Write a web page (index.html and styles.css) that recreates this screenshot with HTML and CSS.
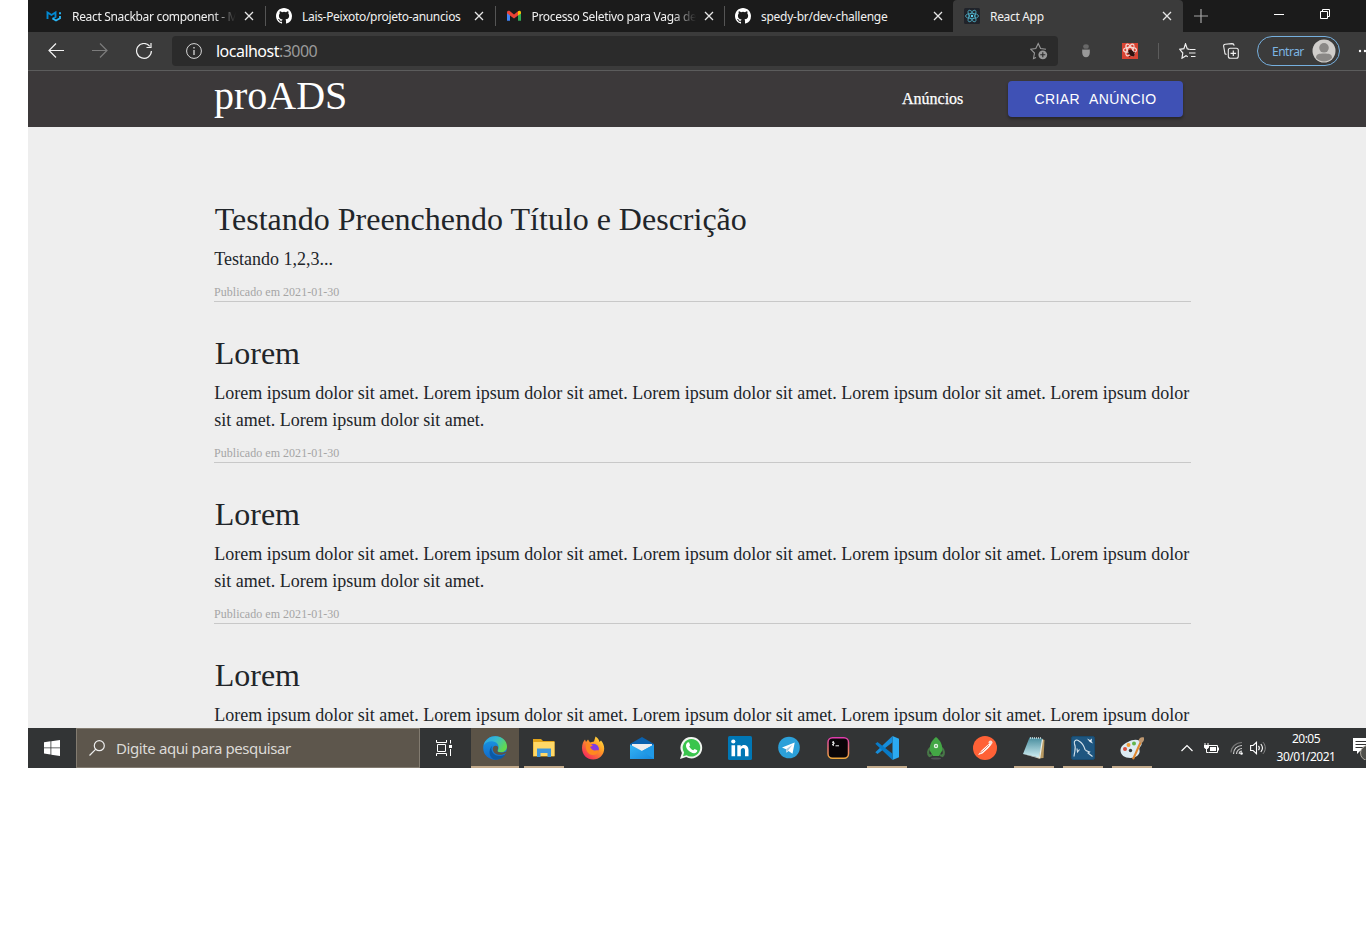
FILE: index.html
```html
<!DOCTYPE html>
<html lang="pt-BR">
<head>
<meta charset="utf-8">
<title>React App</title>
<link rel="stylesheet" href="styles.css">
</head>
<body>
<svg width="0" height="0" class="defs">
  <defs>
    <symbol id="close" viewBox="0 0 10 10"><path d="M1 1l8 8M9 1l-8 8" stroke="#e6e6e6" stroke-width="1.3" fill="none"/></symbol>
    <symbol id="github" viewBox="0 0 16 16"><path fill="#fff" d="M8 0C3.58 0 0 3.58 0 8c0 3.54 2.29 6.53 5.47 7.59.4.07.55-.17.55-.38v-1.49c-2.01.37-2.53-.49-2.69-.94-.09-.23-.48-.94-.82-1.13-.28-.15-.68-.52-.01-.53.63-.01 1.08.58 1.23.82.72 1.21 1.87.87 2.33.66.07-.52.28-.87.51-1.07-1.78-.2-3.64-.89-3.64-3.95 0-.87.31-1.59.82-2.15-.08-.2-.36-1.02.08-2.12 0 0 .67-.21 2.2.82a7.4 7.4 0 0 1 4 0c1.53-1.04 2.2-.82 2.2-.82.44 1.1.16 1.92.08 2.12.51.56.82 1.27.82 2.15 0 3.07-1.87 3.75-3.65 3.95.29.25.54.73.54 1.48v2.2c0 .21.15.46.55.38A8 8 0 0 0 16 8c0-4.42-3.58-8-8-8z"/></symbol>
    <linearGradient id="edgeA" x1="0" y1="0" x2="1" y2="0.5"><stop offset="0" stop-color="#2a9fe8"/><stop offset=".5" stop-color="#35b9d0"/><stop offset="1" stop-color="#62d94e"/></linearGradient>
    <linearGradient id="edgeB" x1="0" y1="0" x2="0" y2="1"><stop offset="0" stop-color="#1a9be6"/><stop offset="1" stop-color="#1268c8"/></linearGradient>
    <linearGradient id="fox" x1="1" y1="0" x2="0.2" y2="1"><stop offset="0" stop-color="#fff04a"/><stop offset=".45" stop-color="#ff9a24"/><stop offset="1" stop-color="#f5215f"/></linearGradient>
    <linearGradient id="term" x1="0" y1="0" x2="0" y2="1"><stop offset="0" stop-color="#e03cae"/><stop offset="1" stop-color="#f0a83c"/></linearGradient>
    <linearGradient id="note" x1="0" y1="0" x2="0" y2="1"><stop offset="0" stop-color="#478c9d"/><stop offset="1" stop-color="#cfeef2"/></linearGradient>
    <linearGradient id="mail" x1="0" y1="0" x2="1" y2="1"><stop offset="0" stop-color="#35b5f5"/><stop offset="1" stop-color="#1687dc"/></linearGradient>
  </defs>
</svg>
<div class="desktop">
  <div class="tabs">
    <div class="tab tab-first">
      <svg class="fav" viewBox="0 0 16 16"><path d="M1.500 11V4.500L5.500 7l4-2.500V9l-3 1.800" fill="none" stroke="#0288d1" stroke-width="1.900"/><path d="M6.500 10.500L10 12.500l4-2.300V8M14 4.200v2" fill="none" stroke="#29b6f6" stroke-width="1.900"/></svg>
      <span class="tab-title fade">React Snackbar component - M</span>
      <svg class="x"><use href="#close"/></svg>
    </div>
    <div class="tab">
      <svg class="fav"><use href="#github"/></svg>
      <span class="tab-title">Lais-Peixoto/projeto-anuncios</span>
      <svg class="x"><use href="#close"/></svg>
    </div>
    <div class="tab">
      <svg class="fav" viewBox="0 0 16 16"><path d="M1 3.500v9.300h3V7z" fill="#4285f4"/><path d="M15 3.500v9.300h-3V7z" fill="#34a853"/><path d="M1 4.500C1 2.500 3 2.500 4 3.200l4 3.200 4-3.200v4.200L8 10.500 1 5.300z" fill="#ea4335"/><path d="M12 3.200c1.200-1 3-.5 3 1.200V5.500L12 7.600z" fill="#fbbc04"/></svg>
      <span class="tab-title fade">Processo Seletivo para Vaga de</span>
      <svg class="x"><use href="#close"/></svg>
    </div>
    <div class="tab tab-last">
      <svg class="fav"><use href="#github"/></svg>
      <span class="tab-title">spedy-br/dev-challenge</span>
      <svg class="x"><use href="#close"/></svg>
    </div>
    <div class="tab active">
      <svg class="fav" viewBox="0 0 16 16"><rect width="16" height="16" rx="1.500" fill="#20232a"/><g fill="none" stroke="#4fb0c8" stroke-width=".8"><ellipse cx="8" cy="8" rx="6.500" ry="2.600"/><ellipse cx="8" cy="8" rx="6.500" ry="2.600" transform="rotate(60 8 8)"/><ellipse cx="8" cy="8" rx="6.500" ry="2.600" transform="rotate(120 8 8)"/></g><circle cx="8" cy="8" r="1.200" fill="#61dafb"/></svg>
      <span class="tab-title">React App</span>
      <svg class="x"><use href="#close"/></svg>
    </div>
    <div class="win">
      <svg class="plus" viewBox="0 0 14 14"><path d="M7 0v14M0 7h14" stroke="#a6a6a6" stroke-width="1.200"/></svg>
      <svg class="min" viewBox="0 0 10 10"><path d="M0 4.500h10" stroke="#fff"/></svg>
      <svg class="rest" viewBox="0 0 10 10"><path d="M.5 2.500h7v7h-7zM2.500 2.500v-2h7v7h-2" fill="none" stroke="#fff"/></svg>
    </div>
  </div>

  <div class="toolbar">
    <svg class="nav" viewBox="0 0 16 16"><path d="M16 7.500H1M8 .5l-7 7 7 7" fill="none" stroke="#f2f2f2" stroke-width="1.200"/></svg>
    <svg class="nav" viewBox="0 0 16 16"><path d="M0 7.500h15M8 .5l7 7-7 7" fill="none" stroke="#7c7c7c" stroke-width="1.200"/></svg>
    <svg class="nav" viewBox="0 0 16 16"><path d="M13.800 3.300A7.400 7.400 0 1 0 15.400 8M15 0v4.500h-4.500" fill="none" stroke="#f2f2f2" stroke-width="1.200"/></svg>
    <div class="address">
      <svg class="nav" viewBox="0 0 16 16"><circle cx="8" cy="8" r="7.400" fill="none" stroke="#d8d8d8"/><path d="M8 7v5M8 4v1.500" stroke="#d8d8d8" stroke-width="1.300"/></svg>
      <span class="url">localhost<span class="port">:3000</span></span>
      <svg class="addfav" viewBox="0 0 18 18"><path d="M6 15.500L3.500 16.500 4.500 11 .8 7.300l5-.8L8.200 1.500l2.400 5 5.400.8" fill="none" stroke="#999" stroke-width="1.100"/><circle cx="12.800" cy="12.800" r="4.400" fill="#999"/><path d="M12.800 10.300v5M10.300 12.800h5" stroke="#2b2b2b" stroke-width="1.100"/></svg>
    </div>
    <div class="tools">
      <svg class="bug" viewBox="0 0 16 16"><ellipse cx="8" cy="3.500" rx="2.800" ry="2.300" fill="#686868"/><path d="M4.200 6h7.600v3.500c0 3-1.600 4.800-3.800 4.800s-3.800-1.800-3.800-4.800z" fill="#999"/><path d="M4 6.300h8" stroke="#555"/></svg>
      <svg class="redext" viewBox="0 0 16 16"><rect width="16" height="16" fill="#d94332"/><g fill="none" stroke="#f5d5d0" stroke-width="1.200"><ellipse cx="8" cy="7" rx="6.500" ry="2.600"/><ellipse cx="8" cy="7" rx="6.500" ry="2.600" transform="rotate(60 8 7)"/><ellipse cx="8" cy="7" rx="6.500" ry="2.600" transform="rotate(120 8 7)"/></g><ellipse cx="9.500" cy="10" rx="2.300" ry="4" fill="#30120f" transform="rotate(-40 9.500 10)"/><path d="M5.500 10l6 3M7 14l6-5" stroke="#30120f" stroke-width=".8"/></svg>
      <i class="divider"></i>
      <svg class="favlist" viewBox="0 0 17 16"><path d="M10.300 6.300L8.200 5.800 6.500.8 4.900 5.600.8 6.300l3 3.700-.8 5.200 4-2.500 1.800 1M10.500 6.500h6M10 10h6.500M12 13.500h4.500" fill="none" stroke="#f0f0f0" stroke-width="1.200"/></svg>
      <svg class="coll" viewBox="0 0 16 16"><path d="M3.500 11.500L2 10.800.7 3.500C.5 2 1 1.300 2.300 1.200L9 .6c1.300 0 2 .6 2.200 2" fill="none" stroke="#f0f0f0" stroke-width="1.100"/><rect x="5.300" y="5.300" width="10" height="10" rx="2" fill="none" stroke="#f0f0f0" stroke-width="1.100"/><path d="M10.300 7.500v5.600M7.500 10.300h5.600" stroke="#f0f0f0" stroke-width="1.200"/></svg>
      <div class="login"><span>Entrar</span><svg viewBox="0 0 24 24"><circle cx="12" cy="12" r="11.500" fill="#cfcdca"/><circle cx="12" cy="8.800" r="4.800" fill="#8a8886"/><path d="M4 19c0-4 3-4.500 8-4.500s8 .5 8 4.500c-2 2-5 3.500-8 3.500S6 21 4 19z" fill="#8a8886"/></svg></div>
      <svg class="dots" viewBox="0 0 16 4"><circle cx="2" cy="2" r="1.200" fill="#fff"/><circle cx="7" cy="2" r="1.200" fill="#fff"/><circle cx="12" cy="2" r="1.200" fill="#fff"/></svg>
    </div>
  </div>

  <header class="site-header">
    <span class="logo">proADS</span>
    <a class="link">Anúncios</a>
    <button class="create">CRIAR ANÚNCIO</button>
  </header>

  <main class="ads">
    <article class="ad"><h2>Testando Preenchendo Título e Descrição</h2><p>Testando 1,2,3...</p><small>Publicado em 2021-01-30</small></article>
    <article class="ad"><h2>Lorem</h2><p>Lorem ipsum dolor sit amet. Lorem ipsum dolor sit amet. Lorem ipsum dolor sit amet. Lorem ipsum dolor sit amet. Lorem ipsum dolor<br>sit amet. Lorem ipsum dolor sit amet.</p><small>Publicado em 2021-01-30</small></article>
    <article class="ad"><h2>Lorem</h2><p>Lorem ipsum dolor sit amet. Lorem ipsum dolor sit amet. Lorem ipsum dolor sit amet. Lorem ipsum dolor sit amet. Lorem ipsum dolor<br>sit amet. Lorem ipsum dolor sit amet.</p><small>Publicado em 2021-01-30</small></article>
    <article class="ad"><h2>Lorem</h2><p>Lorem ipsum dolor sit amet. Lorem ipsum dolor sit amet. Lorem ipsum dolor sit amet. Lorem ipsum dolor sit amet. Lorem ipsum dolor</p></article>
  </main>

  <footer class="taskbar">
    <div class="start"><svg viewBox="0 0 16 16"><path d="M0 2.200L6.500 1.300v6.200H0zM7.300 1.200L16 0v7.500H7.300zM0 8.300h6.500v6.200L0 13.600zM7.300 8.300H16V16l-8.700-1.200z" fill="#fff"/></svg></div>
    <div class="search"><svg viewBox="0 0 16 16"><circle cx="10.300" cy="5.700" r="5" fill="none" stroke="#eee" stroke-width="1.200"/><path d="M6.800 9.200L.5 15.500" stroke="#eee" stroke-width="1.200"/></svg><span>Digite aqui para pesquisar</span></div>
    <div class="slot task"><svg class="s16" viewBox="0 0 16 16"><path d="M.5 0v2.500h10V0M.5 16v-2.500h10V16M1.500 4.500h8v7h-8zM14.500 0v3.500M14.500 9v7" fill="none" stroke="#fff"/><rect x="13" y="5" width="3" height="3" fill="#fff"/></svg></div>
    <div class="slot current"><svg viewBox="0 0 24 24"><circle cx="12" cy="12" r="11.800" fill="url(#edgeB)"/><path d="M.5 9.500C2 3.500 7 .2 12.500.2 19 .2 24 5 24 10.500c0 3.800-3 5.800-6 5.800-2.500 0-4-.8-3.300-1.800C16.500 12 16 5.500 9 5.200 5 5.200 2 7 .5 9.500z" fill="url(#edgeA)"/><path d="M9.500 9.500c-3 4 .5 10.500 7 10.500 2.500 0 4.500-.6 5.800-1.500-2 3.500-5.800 5.300-9.800 5.200C6 23 4.500 14 9.500 9.500z" fill="#0c59a4"/><path d="M14.800 10.500c-2.500-2-5.500 0-5 3 .5 3.500 4 5.500 7.500 5.300 2.200 0 4-.8 5.300-1.600 1.200-.8.400-1.700-.8-1.300-2.700 1-8 1-7.300-1.600.6-1.400.8-2.500.3-3.800z" fill="#5b5347"/></svg></div>
    <div class="slot open"><svg viewBox="0 0 24 24"><path d="M1 3h8l2 2h11.500v15.500H1z" fill="#e3a51b"/><path d="M1.500 6h21v14H1.500z" fill="#ffd867"/><path d="M5 21v-8.500h14V21h-3.500v-4h-7v4z" fill="#3e96dc"/></svg></div>
    <div class="slot"><svg viewBox="0 0 24 24"><path d="M1 12C1 8 2.500 5 4 3.500L5 6l2-2.500L9 6.500l4-1L14.500.5C17 2 18 4 18.500 6L20 4.500c2 2 3.200 5 3.200 8 0 6.500-5 11-11 11S1 19 1 12z" fill="url(#fox)"/><circle cx="12.500" cy="13" r="5.300" fill="#9136d9"/><path d="M5 8c3-1 5 .5 7 1.500L9 11l2 2.500c3 2 5 0 7 1-1 3-3 4.500-6 4.500-5 0-8-5-7-11z" fill="#ff881f"/><path d="M11 8.500c4-1 7 2 6.500 5.500l-3-2z" fill="#7541e8"/></svg></div>
    <div class="slot"><svg viewBox="0 0 24 24"><path d="M0 8L12 1l12 7v7H0z" fill="#0b61ad"/><path d="M2 8h20v7H2z" fill="#eee"/><path d="M0 8.500L12 15l12-6.500V23H0z" fill="url(#mail)"/><path d="M12 15L24 23V8.500z" fill="#2099e6"/></svg></div>
    <div class="slot"><svg viewBox="0 0 24 24"><path d="M12.500 1A10.700 10.700 0 0 1 12.500 22.400c-2 0-3.700-.4-5.300-1.300L1 23l1.900-6A10.700 10.700 0 0 1 12.500 1z" fill="#f2f5f1"/><path d="M12.500 3a8.800 8.800 0 1 1-4.800 16.200L4 20.200l1.100-3.700A8.800 8.800 0 0 1 12.500 3z" fill="#3ac54d"/><path d="M8.500 6.500l1.500-.2 1.200 3-1 1.200c1 2 2.300 3 4.100 3.800l1.300-1.300 2.700 1.300c.2 1.700-1.500 3-3.300 2.900-4-.5-8-4.200-8-7.500 0-1.200.5-2.500 1.500-3.200z" fill="#fff"/></svg></div>
    <div class="slot"><svg viewBox="0 0 24 24"><rect width="24" height="24" rx="1.500" fill="#0077b5"/><circle cx="5.300" cy="5.500" r="2.100" fill="#fff"/><path d="M3.500 9.200h3.600v11H3.500zM9.300 9.200h3.400v1.500c2-3 7.800-2.400 7.800 3v6.500H17v-5.700c0-3.500-4.200-3-4.200 0v5.700H9.300z" fill="#fff"/></svg></div>
    <div class="slot"><svg viewBox="0 0 24 24"><circle cx="12" cy="11.500" r="10.800" fill="#2ca0d9"/><path d="M5 11.500l12.700-5-2.200 11.200-4-2.700-2 1.800-.5-3.500z" fill="#fff"/><path d="M9 13.300l6.500-4.500-4.200 5.500-1.600 1.900z" fill="#a9cbe0"/></svg></div>
    <div class="slot"><svg viewBox="0 0 24 24"><rect x="2" y="1.800" width="20.500" height="20.500" rx="4.500" fill="#0a0508" stroke="url(#term)" stroke-width="1.500"/><path d="M6 6l2.500 1.200L6 9M9.500 9.800H13M7.300 5v5" stroke="#eee" fill="none"/></svg></div>
    <div class="slot open"><svg viewBox="0 0 24 24"><path d="M17.500 0L24 2.800v18.400L17.500 24z" fill="#2baaf2"/><path d="M17.500 0v6.300L2.500 18 .3 16.200z" fill="#168ddb"/><path d="M17.500 24v-6.300L2.500 6 .3 7.800z" fill="#087bc8"/></svg></div>
    <div class="slot"><svg viewBox="0 0 24 24"><ellipse cx="12" cy="22.500" rx="5" ry="1" fill="#505255"/><path d="M6.500 12c-3 2-3 6-1 8l2.500-1M17.500 12c3 2 3 6 1 8L16 19" fill="none" stroke="#477747" stroke-width="2.200"/><path d="M12 1c5 4 7 9 6 14l-3 5H9l-3-5C5 10 7 5 12 1z" fill="#43a745"/><circle cx="12" cy="10" r="2.200" fill="#e5f4e5"/><circle cx="12" cy="10" r="1" fill="#6dad70"/></svg></div>
    <div class="slot"><svg viewBox="0 0 24 24"><circle cx="12" cy="12" r="12" fill="#ff6136"/><path d="M5 19l3.500-4.500 5.500-5 3-2.500 1.500 1.500-3.500 4-5.500 5z" fill="#fff"/><circle cx="17.500" cy="6.500" r="2" fill="#f9d9cd"/><path d="M10 15l6-6M7 17l3-2" stroke="#d65c3a" stroke-width=".7"/></svg></div>
    <div class="slot open"><svg viewBox="0 0 24 24"><path d="M20 3l2.500 1-1 18-6 .5z" fill="#b99a62"/><path d="M7.500 1.500l13 1L17 21.500 1 18z" fill="url(#note)"/><path d="M1 18L17 21.500 20 3l1 1-2.800 18.700z" fill="#e8eee8"/><path d="M8 2h12" stroke="#d4e0e2" stroke-width="1.500" stroke-dasharray="1 1"/></svg></div>
    <div class="slot open"><svg viewBox="0 0 24 24"><rect x=".3" y=".3" width="23.400" height="23.400" rx="2.500" fill="#1e5680" stroke="#174b70"/><path d="M3 20.500C3.500 15 5.500 12 3.500 8 2.500 4.500 5 3 8 5c3.500 2 5 5 6 8.500.8 1.500 3 2 4.500 2.500l-1.500 1 4.500 3.500M6 12.500l.5 3.500 2-2.500" fill="none" stroke="#d6e4ec" stroke-width="1.100"/><path d="M16 2.500l3 1.500 2-1.500-.5 2.800 1.500 2.200-3.200-1.500z" fill="#e8f0f4"/></svg></div>
    <div class="slot open"><svg viewBox="0 0 24 24"><path d="M8 6c5-3 12-3 13.500 1 1 3-3 4-2 7 1 4-3 8-9 8-6 0-10-3-10-7.500C.5 11 3 8 8 6z" fill="#dcebf2"/><circle cx="5" cy="13" r="2" fill="#d84d3c"/><circle cx="8.500" cy="9" r="2" fill="#f29c35"/><circle cx="14" cy="7.500" r="2" fill="#62b54a"/><circle cx="10.500" cy="14.500" r="1.700" fill="#353838"/><path d="M20 5l2 1-8 17.500-2-.5z" fill="#df872f"/><path d="M18.500 5C19 2 21 .5 24 1.500c.5 3-1 5-3 5.500z" fill="#bd9770"/></svg></div>
    <div class="tray">
      <svg class="chev" viewBox="0 0 12 8"><path d="M.5 7L6 1.500 11.500 7" fill="none" stroke="#fff" stroke-width="1.200"/></svg>
      <svg class="bat" viewBox="0 0 16 12"><path d="M5.500 3.500h9v7h-9M3.500 6v4.500h2" fill="none" stroke="#fff"/><path d="M7 5h6v4H7zM15 5.500h1v3h-1zM1 3h5v2.500L4.500 7h-2L1 5.500z" fill="#fff"/><path d="M2 1v2M5 1v2" stroke="#fff"/></svg>
      <svg class="wifi" viewBox="0 0 14 14"><path d="M1 11.500C1 6 6 1.500 12 1.500" fill="none" stroke="#777" stroke-width="1.200"/><path d="M3.500 13C3.500 8 7 4.500 12 4.500M6.500 13c0-3 2.500-5.500 5.500-5.500M9.200 13c0-1.500 1.300-2.800 2.800-2.800" fill="none" stroke="#ccc" stroke-width="1.200"/><circle cx="11.500" cy="12.500" r="1.300" fill="#fff"/></svg>
      <svg class="vol" viewBox="0 0 17 14"><path d="M.6 4.500h2.500L6.500 1.300v11.400L3.100 9.500H.6z" fill="none" stroke="#fff" stroke-width="1.100"/><path d="M8.500 4.800c1 1.300 1 3.100 0 4.400M10.800 3c2 2.400 2 5.600 0 8" fill="none" stroke="#fff" stroke-width="1.100"/><path d="M13 1.200c3 3.500 3 8.100 0 11.600" fill="none" stroke="#888"/></svg>
      <div class="clock"><span class="time">20:05</span><span class="date">30/01/2021</span></div>
      <svg class="notif" viewBox="0 0 24 24"><path d="M0 2h16v13H7l-3 3v-3H0z" fill="#fff"/><path d="M2.500 5.500H14M2.500 8.500H14M2.500 11.500H10" stroke="#333"/><circle cx="15" cy="17" r="7.500" fill="#50504c" stroke="#a9a49b"/></svg>
    </div>
  </footer>
</div>
</body>
</html>
```

FILE: styles.css
```css
* { box-sizing: border-box; }
body { margin: 0; background: #fff; overflow: hidden; }
svg { display: block; flex: none; }
.defs { position: absolute; }
.desktop { margin-left: 28px; width: 1338px; height: 768px; overflow: hidden; display: flex; flex-direction: column; font-family: "Noto Sans", sans-serif; }

.tabs { height: 32px; flex: none; display: flex; background: #1b1b1b; color: #f0f0f0; font-size: 12px; }
.tab { width: 229.5px; flex: none; display: flex; align-items: center; padding-left: 10px; position: relative; }
.tab::after { content: ""; position: absolute; right: 0; top: 6px; width: 1px; height: 20px; background: #555; }
.tab-first { width: 238px; padding-left: 18px; }
.tab-last::after, .active::after { display: none; }
.tab-last { width: 228px; }
.active { background: #3b3b3b; width: 230px; padding-left: 11px; border-radius: 4px 4px 0 0; }
.fav { width: 16px; height: 16px; }
.tab-title { width: 164px; margin: 0 7px 0 10px; white-space: nowrap; overflow: hidden; line-height: 20px; letter-spacing: -.32px; padding-top: 1px; }
.tab-last .tab-title { letter-spacing: -.27px; }
.fade { mask-image: linear-gradient(to right, #000 86%, transparent); }
.x { width: 10px; height: 10px; margin-left: 1px; }
.tab-last .x, .tab-first .x { margin-left: 1px; }
.win { flex: 1; display: flex; padding-left: 11px; }
.plus { width: 14px; height: 14px; margin-top: 9px; }
.min { width: 10px; height: 10px; margin: 10px 0 0 66px; }
.rest { width: 10px; height: 10px; margin: 9px 0 0 36px; }

.toolbar { height: 39px; flex: none; display: flex; align-items: center; background: #3b3b3b; border-bottom: 1px solid #5c5c5c; padding-left: 20px; }
.nav { width: 16px; height: 16px; margin-right: 28px; }
.address { width: 886px; height: 30px; flex: none; margin-left: -8px; background: #2b2b2b; border-radius: 4px; display: flex; align-items: center; padding: 0 10px 0 14px; }
.address .nav { margin-right: 14px; }
.url { flex: 1; color: #fff; font-size: 16px; line-height: 22px; letter-spacing: -.52px; }
.port { color: #9a9a9a; }
.addfav { width: 18px; height: 18px; }
.tools { display: flex; align-items: center; flex: none; }
.bug { width: 16px; height: 16px; margin-left: 20px; }
.redext { width: 16px; height: 16px; margin-left: 28px; }
.divider { width: 1px; height: 16px; background: #5c5c5c; margin-left: 20px; }
.favlist { width: 17px; height: 16px; margin-left: 20px; }
.coll { width: 16px; height: 16px; margin-left: 27px; }
.login { width: 83px; height: 30px; margin-left: 18px; border: 1px solid #76b0df; border-radius: 15px; display: flex; align-items: center; justify-content: space-between; padding: 0 3px 0 14px; color: #7db5e3; font-size: 12px; letter-spacing: -.5px; }
.login svg { width: 24px; height: 24px; }
.dots { width: 16px; height: 4px; margin-left: 18px; }

.site-header { height: 56px; flex: none; display: flex; align-items: center; background: #3c393a; color: #fff; padding-left: 186px; font-family: "Liberation Serif", serif; }
.logo { width: 688px; font-size: 40px; line-height: 44px; margin-top: -7px; }
.link { width: 106px; font-size: 16px; -webkit-text-stroke: .25px #fff; }
.create { width: 175px; height: 36px; padding: 0; border: 0; border-radius: 4px; background: #3f51b5; color: #fff; font: 14px/24px "Liberation Sans", sans-serif; letter-spacing: .4px; word-spacing: 5.5px; white-space: nowrap; box-shadow: 0 2px 3px rgba(0,0,0,.35); }

.ads { flex: 1; min-height: 0; overflow: hidden; background: #eee; padding: 73px 175px 0 186px; font-family: "Liberation Serif", serif; color: #212529; }
.ad { border-bottom: 1px solid #c8c8c8; margin-bottom: 32px; width: 977px; }
.ad h2 { margin: 0 0 8px; padding-left: .7px; font-size: 32px; line-height: 38px; font-weight: 400; }
.ad p { margin: 0 0 10px; padding-left: .3px; font-size: 18px; line-height: 27px; white-space: nowrap; }
.ad small { display: block; font-size: 12px; line-height: 18px; color: #a5a5a5; letter-spacing: .03px; }

.taskbar { height: 40px; flex: none; display: flex; background: #323435; color: #fff; }
.start { width: 48px; flex: none; display: flex; align-items: center; justify-content: center; }
.start svg { width: 16px; height: 16px; }
.search { width: 344px; flex: none; background: #5d564c; border: 1px solid #827b70; display: flex; align-items: center; padding-left: 12px; font-size: 15px; color: #dcdad7; letter-spacing: -.4px; }
.search svg { width: 16px; height: 16px; margin-right: 11px; }
.slot { width: 48px; height: 40px; margin-right: 1px; display: flex; align-items: center; justify-content: center; flex: none; position: relative; }
.slot svg { width: 24px; height: 24px; }
.slot .s16 { width: 16px; height: 16px; }
.task { margin-right: 3px; }
.current { background: #5b5347; }
.open::after, .current::after { content: ""; position: absolute; left: 4px; right: 4px; bottom: 0; height: 2px; background: #c2aa8b; }
.current::after { left: 0; right: 0; }
.tray { display: flex; align-items: center; padding-left: 24px; flex: none; }
.chev { width: 12px; height: 8px; }
.bat { width: 16px; height: 12px; margin-left: 10px; }
.wifi { width: 14px; height: 14px; margin-left: 11px; }
.vol { width: 17px; height: 14px; margin-left: 6px; }
.clock { width: 64px; margin-left: 7px; display: flex; flex-direction: column; align-items: center; font-size: 12px; line-height: 18px; white-space: nowrap; letter-spacing: -.5px; }
.notif { width: 24px; height: 24px; margin-left: 15px; }
```
